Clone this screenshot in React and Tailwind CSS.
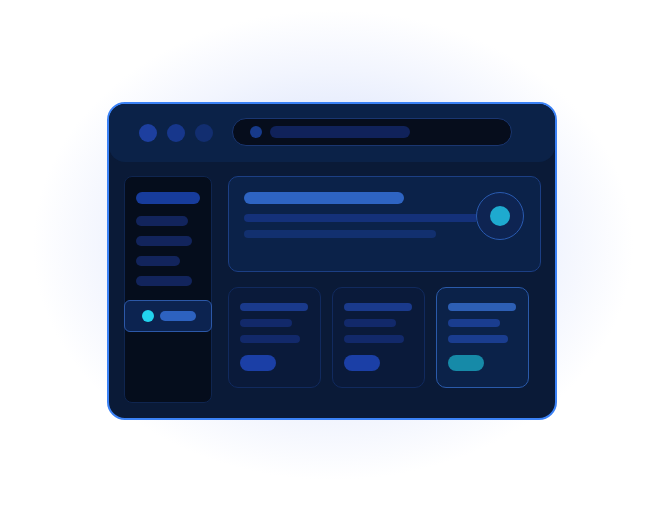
export default function App() {
  return (
    <div className="w-[666px] h-[512px] flex justify-center items-start pt-[102px] bg-white bg-[radial-gradient(ellipse_300px_235px_at_333px_245px,#d0dbfa_0%,#dfe7fc_45%,#f2f5fe_75%,#ffffff_100%)]">
      <div className="mr-[2px] w-[450px] h-[318px] rounded-[18px] border-2 border-[#3b82f6] bg-[#0a1a37] flex flex-col overflow-hidden">
        {/* header */}
        <div className="h-[58px] shrink-0 bg-[#0b2248] rounded-b-[16px] flex items-center pl-[30px]">
          <div className="flex gap-[10px]">
            <div className="w-[18px] h-[18px] rounded-full bg-[#1d3f9f]" />
            <div className="w-[18px] h-[18px] rounded-full bg-[#17378c]" />
            <div className="w-[18px] h-[18px] rounded-full bg-[#122e70]" />
          </div>
          <div className="ml-[19px] -mt-[2px] w-[280px] h-[28px] rounded-full bg-[#060d1c] border border-[#1a3670] flex items-center pl-[17px] gap-[8px]">
            <div className="w-[12px] h-[12px] rounded-full bg-[#173a8a]" />
            <div className="w-[140px] h-[12px] rounded-full bg-[#10225a]" />
          </div>
        </div>

        {/* body */}
        <div className="flex-1 flex pt-[14px] pl-[15px] pr-[14px] pb-[15px] gap-[16px]">
          {/* sidebar */}
          <div className="w-[88px] rounded-[8px] bg-[#050d1c] border border-[#0f254f] pt-[15px] flex flex-col">
            <div className="pl-[11px] flex flex-col">
              <div className="w-[64px] h-[12px] rounded-full bg-[#173c9c]" />
              <div className="mt-[12px] w-[52px] h-[10px] rounded-full bg-[#12245c]" />
              <div className="mt-[10px] w-[56px] h-[10px] rounded-full bg-[#12245c]" />
              <div className="mt-[10px] w-[44px] h-[10px] rounded-full bg-[#12245c]" />
              <div className="mt-[10px] w-[56px] h-[10px] rounded-full bg-[#12245c]" />
            </div>
            <div className="mt-[14px] -mx-px h-[32px] rounded-[6px] bg-[#0c2350] border border-[#2c58a8] flex items-center pl-[17px] gap-[6px]">
              <div className="w-[12px] h-[12px] rounded-full bg-[#22d3ee]" />
              <div className="w-[36px] h-[10px] rounded-full bg-[#2d62c0]" />
            </div>
          </div>

          {/* main */}
          <div className="flex-1 flex flex-col gap-[15px]">
            <div className="h-[96px] rounded-[10px] bg-[#0b2249] border border-[#1c3f84] flex items-start pt-[15px] pl-[15px] pr-[16px]">
              <div className="flex-1 flex flex-col">
                <div className="w-[160px] h-[12px] rounded-full bg-[#2e64c2]" />
                <div className="mt-[10px] w-full h-[8px] rounded-l-full bg-[#14317a]" />
                <div className="mt-[8px] w-[192px] h-[8px] rounded-full bg-[#12306f]" />
              </div>
              <div className="w-[48px] h-[48px] rounded-full border-[1.5px] border-[#2a5bb0] bg-[#0e2452] flex items-center justify-center">
                <div className="w-[20px] h-[20px] rounded-full bg-[#1eaacf]" />
              </div>
            </div>

            <div className="flex gap-[11px]">
              <div className="w-[93px] h-[101px] rounded-[10px] bg-[#0a1a3a] border border-[#112a5e] pt-[15px] pl-[11px] flex flex-col">
                <div className="w-[68px] h-[8px] rounded-full bg-[#1a3a8c]" />
                <div className="mt-[8px] w-[52px] h-[8px] rounded-full bg-[#12296a]" />
                <div className="mt-[8px] w-[60px] h-[8px] rounded-full bg-[#12296a]" />
                <div className="mt-[12px] w-[36px] h-[16px] rounded-full bg-[#1b3fa6]" />
              </div>
              <div className="w-[93px] h-[101px] rounded-[10px] bg-[#0a1a3a] border border-[#112a5e] pt-[15px] pl-[11px] flex flex-col">
                <div className="w-[68px] h-[8px] rounded-full bg-[#1a3a8c]" />
                <div className="mt-[8px] w-[52px] h-[8px] rounded-full bg-[#12296a]" />
                <div className="mt-[8px] w-[60px] h-[8px] rounded-full bg-[#12296a]" />
                <div className="mt-[12px] w-[36px] h-[16px] rounded-full bg-[#1b3fa6]" />
              </div>
              <div className="w-[93px] h-[101px] rounded-[10px] bg-[#0b2249] border border-[#2a5aaa] pt-[15px] pl-[11px] flex flex-col">
                <div className="w-[68px] h-[8px] rounded-full bg-[#2d5fb5]" />
                <div className="mt-[8px] w-[52px] h-[8px] rounded-full bg-[#1a3d8f]" />
                <div className="mt-[8px] w-[60px] h-[8px] rounded-full bg-[#1a3d8f]" />
                <div className="mt-[12px] w-[36px] h-[16px] rounded-full bg-[#168aa8]" />
              </div>
            </div>
          </div>
        </div>
      </div>
    </div>
  );
}
